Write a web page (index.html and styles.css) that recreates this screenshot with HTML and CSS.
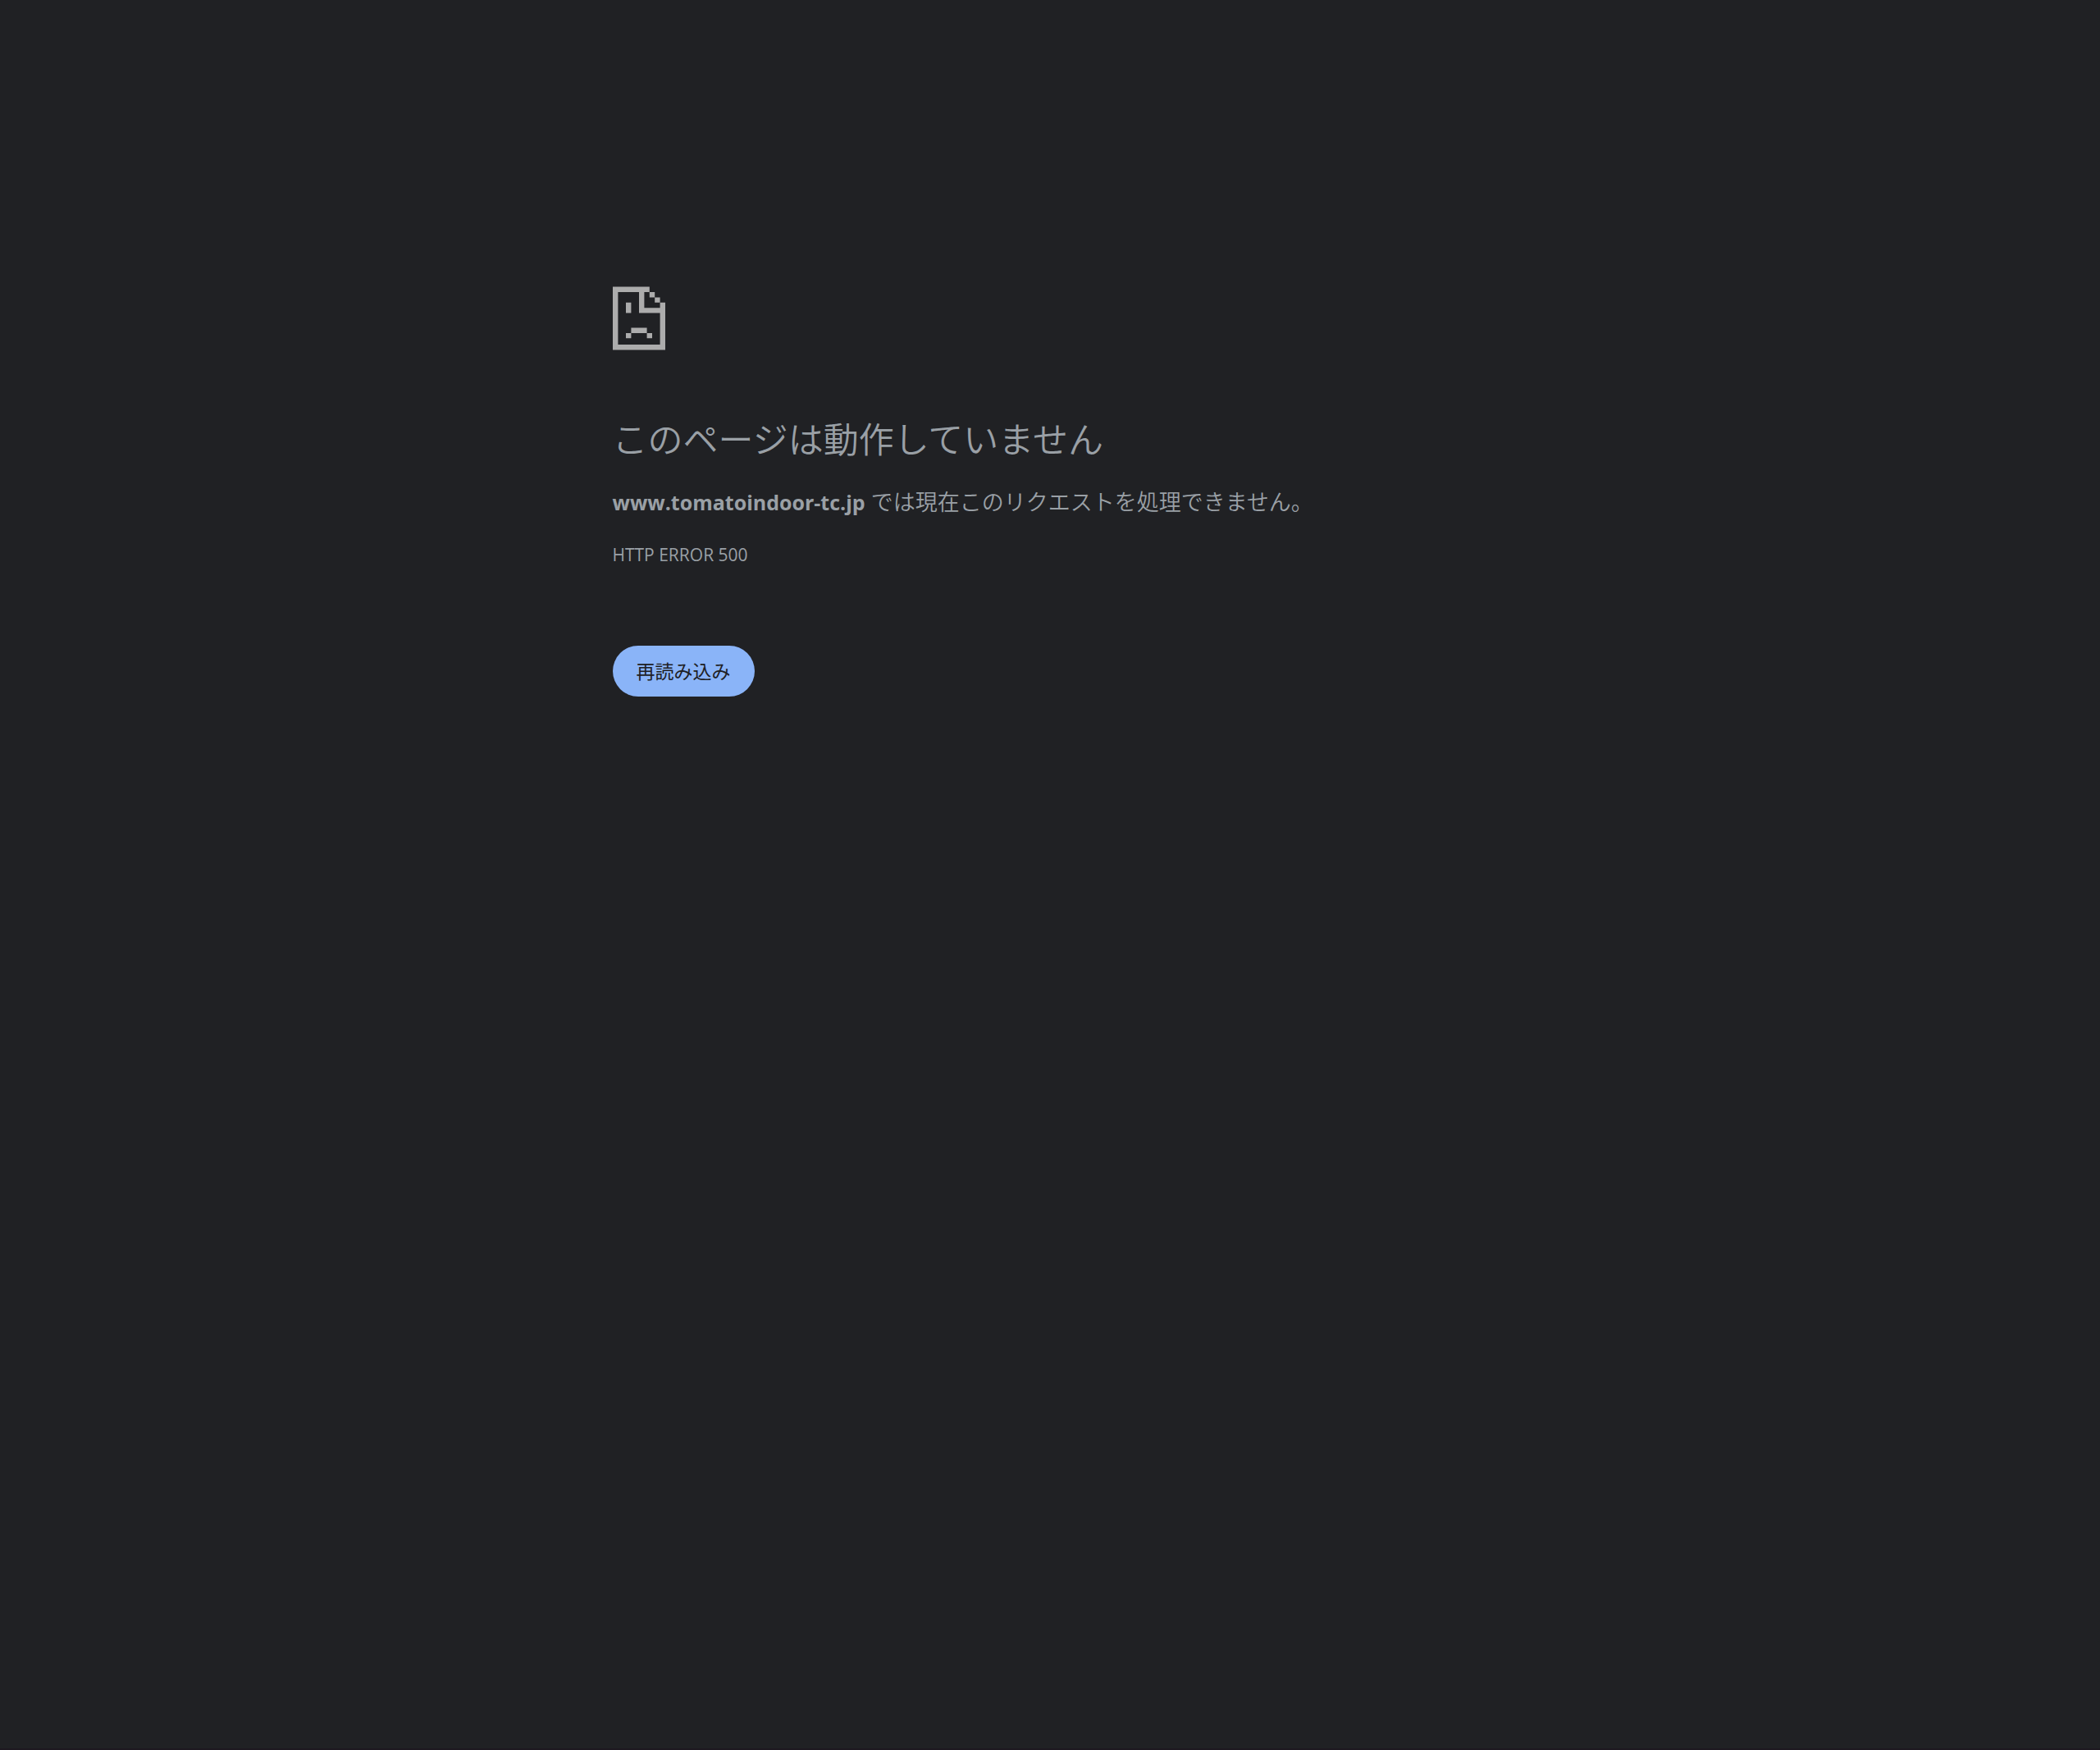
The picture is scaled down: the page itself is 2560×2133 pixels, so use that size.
FILE: index.html
```html
<!DOCTYPE html>
<html lang="ja">
<head>
    <meta charset="UTF-8">
    <meta name="viewport" content="width=device-width, initial-scale=1.0">
    <title>www.tomatoindoor-tc.jp</title>
    <link rel="stylesheet" href="styles.css">
</head>
<body>
    <main class="error-page">
        <!-- Sad page icon -->
        <svg class="error-icon" viewBox="0 0 100 120" aria-hidden="true">
            <path d="M0 0H70V10H60V40H90V30H100V120H0ZM10 10V110H90V50H50V10Z" fill-rule="evenodd"/>
            <path d="M70 10H80V20H70ZM80 20H90V30H80ZM25 30H35V50H25ZM35 78H65V88H35ZM25 88H35V98H25ZM65 88H75V98H65Z"/>
        </svg>

        <h1>このページは動作していません</h1>
        <p class="summary"><strong>www.tomatoindoor-tc.jp</strong> では現在このリクエストを処理できません。</p>
        <div class="error-code">HTTP ERROR 500</div>

        <button type="button" class="reload-button" onclick="location.reload()">再読み込み</button>
    </main>
</body>
</html>
```

FILE: styles.css
```css
body {
    box-sizing: border-box;
    min-height: 100vh;
    margin: 0;
    background-color: #202124;
    border-bottom: 2px solid #1d1820;
    color: #9aa0a6;
    font-family: "Open Sans", "Noto Sans CJK JP", sans-serif;
    font-size: 27px;
    line-height: 43px;
}

.error-page {
    max-width: 1067px;
    margin: 0 auto;
    padding-top: 349px;
}

.error-icon {
    display: block;
    width: 64px;
    height: 78px;
    fill: #acacac;
}

h1 {
    margin: 80px 0 31px;
    font-family: "Noto Sans CJK JP", sans-serif;
    font-size: 43px;
    font-weight: 350;
    line-height: 52px;
}

.summary {
    margin: 0;
    font-weight: 350;
}

.summary strong {
    font-size: 25px;
    font-weight: 700;
}

.error-code {
    margin-top: 26px;
    font-size: 21px;
    line-height: 32px;
}

.reload-button {
    margin-top: 95px;
    padding: 14px 29px;
    border: none;
    border-radius: 32px;
    background-color: #8ab4f8;
    color: #202124;
    font-family: inherit;
    font-size: 23px;
    line-height: 34px;
    cursor: pointer;
}

.reload-button:hover {
    background-color: #aecbfa;
}
```
